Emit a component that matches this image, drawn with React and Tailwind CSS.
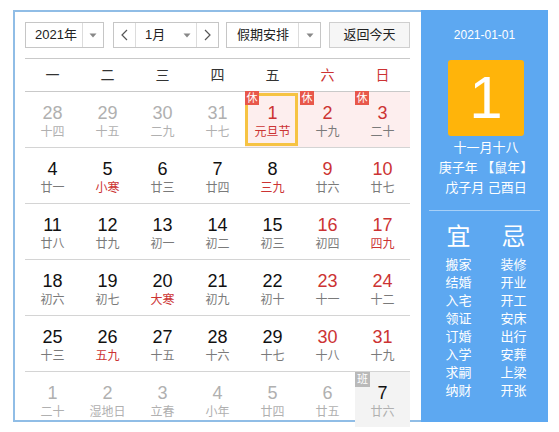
import React from "react";

const rows = [
  [
    { n: 28, l: "十四", o: true },
    { n: 29, l: "十五", o: true },
    { n: 30, l: "二九", o: true },
    { n: 31, l: "十七", o: true },
    { n: 1, l: "元旦节", red: true, lred: true, rest: true, sel: true },
    { n: 2, l: "十九", red: true, rest: true },
    { n: 3, l: "二十", red: true, rest: true },
  ],
  [
    { n: 4, l: "廿一" },
    { n: 5, l: "小寒", lred: true },
    { n: 6, l: "廿三" },
    { n: 7, l: "廿四" },
    { n: 8, l: "三九", lred: true },
    { n: 9, l: "廿六", red: true },
    { n: 10, l: "廿七", red: true },
  ],
  [
    { n: 11, l: "廿八" },
    { n: 12, l: "廿九" },
    { n: 13, l: "初一" },
    { n: 14, l: "初二" },
    { n: 15, l: "初三" },
    { n: 16, l: "初四", red: true },
    { n: 17, l: "四九", red: true, lred: true },
  ],
  [
    { n: 18, l: "初六" },
    { n: 19, l: "初七" },
    { n: 20, l: "大寒", lred: true },
    { n: 21, l: "初九" },
    { n: 22, l: "初十" },
    { n: 23, l: "十一", red: true },
    { n: 24, l: "十二", red: true },
  ],
  [
    { n: 25, l: "十三" },
    { n: 26, l: "五九", lred: true },
    { n: 27, l: "十五" },
    { n: 28, l: "十六" },
    { n: 29, l: "十七" },
    { n: 30, l: "十八", red: true },
    { n: 31, l: "十九", red: true },
  ],
  [
    { n: 1, l: "二十", o: true },
    { n: 2, l: "湿地日", o: true },
    { n: 3, l: "立春", o: true },
    { n: 4, l: "小年", o: true },
    { n: 5, l: "廿四", o: true },
    { n: 6, l: "廿五", o: true },
    { n: 7, l: "廿六", work: true },
  ],
];

const yi = ["搬家", "结婚", "入宅", "领证", "订婚", "入学", "求嗣", "纳财"];
const ji = ["装修", "开业", "开工", "安床", "出行", "安葬", "上梁", "开张"];

function Arrow() {
  return (
    <svg width="8" height="5" viewBox="0 0 8 5">
      <path d="M0.5 0.5 L7.5 0.5 L4 4.5 Z" fill="#888" />
    </svg>
  );
}

function Chevron({ dir }) {
  return (
    <svg width="7" height="12" viewBox="0 0 7 12">
      <path
        d={dir === "l" ? "M6 1 L1 6 L6 11" : "M1 1 L6 6 L1 11"}
        fill="none"
        stroke="#555"
        strokeWidth="1.2"
      />
    </svg>
  );
}

function Cell({ c }) {
  let numColor = "text-[#111]";
  if (c.o) numColor = "text-[#b0b0b0]";
  else if (c.red) numColor = "text-[#cc3333]";
  let lunColor = "text-[#7a7a7a]";
  if (c.o || c.work) lunColor = "text-[#b0b0b0]";
  if (c.lred) lunColor = "text-[#cc3333]";
  let bg = "";
  if (c.rest) bg = "bg-[#fdeeee]";
  if (c.work) bg = "bg-[#f3f3f3]";
  return (
    <div className={`relative h-[55px] flex flex-col items-center pt-[10px] ${bg}`}>
      {c.sel && (
        <div className="absolute left-0 top-[1px] w-[53px] h-[53px] border-[3px] border-[#f6c343]" />
      )}
      {c.rest && (
        <div className="absolute left-0 top-[-1px] w-[14px] h-[14px] bg-[#e8574a] text-white text-[11px] leading-[14px] text-center">
          休
        </div>
      )}
      {c.work && (
        <div className="absolute left-0 top-0 w-[15px] h-[15px] bg-[#b9b9b9] text-white text-[11px] leading-[15px] text-center">
          班
        </div>
      )}
      <div className={`relative text-[18px] leading-[22px] ${numColor}`}>{c.n}</div>
      <div className={`relative text-[12px] leading-[16px] ${lunColor}`}>{c.l}</div>
    </div>
  );
}

export default function App() {
  const font = { fontFamily: '"Liberation Sans", "Noto Sans CJK SC", sans-serif' };
  return (
    <div className="w-[559px] h-[432px] bg-white pt-[10px] pl-[13px]" style={font}>
      <div className="w-[535px] h-[412px] border-2 border-[#90bde6] flex">
        <div className="w-[406px] pl-[10px] pr-[11px] pt-[10px]">
          {/* controls */}
          <div className="flex h-[26px] text-[13px] text-[#222]">
            <div className="flex w-[79px] border border-[#c6c6c6] bg-white">
              <div className="w-[56px] flex items-center pl-[9px]">2021年</div>
              <div className="flex-1 flex items-center justify-center border-l border-[#dcdcdc]">
                <Arrow />
              </div>
            </div>
            <div className="flex w-[106px] ml-[9px] border border-[#c6c6c6] bg-white">
              <div className="w-[22px] flex items-center justify-center border-r border-[#dcdcdc]">
                <Chevron dir="l" />
              </div>
              <div className="flex-1 flex items-center pl-[9px]">1月</div>
              <div className="w-[18px] flex items-center justify-center">
                <Arrow />
              </div>
              <div className="w-[22px] flex items-center justify-center border-l border-[#dcdcdc]">
                <Chevron dir="r" />
              </div>
            </div>
            <div className="flex w-[95px] ml-[7px] border border-[#c6c6c6] bg-white">
              <div className="w-[71px] flex items-center pl-[10px]">假期安排</div>
              <div className="flex-1 flex items-center justify-center border-l border-[#dcdcdc]">
                <Arrow />
              </div>
            </div>
            <div className="flex w-[81px] ml-[8px] border border-[#cfcfcf] bg-[#f6f6f6] items-center justify-center">
              返回今天
            </div>
          </div>
          {/* weekday header */}
          <div className="mt-[10px] grid grid-cols-7 h-[34px] border-t border-b border-[#c9c9c9] text-[14px] items-center text-center text-[#333]">
            <div>一</div>
            <div>二</div>
            <div>三</div>
            <div>四</div>
            <div>五</div>
            <div className="text-[#cc3333]">六</div>
            <div className="text-[#cc3333]">日</div>
          </div>
          {rows.map((r, i) => (
            <div key={i} className={`grid grid-cols-7 ${i > 0 ? "border-t border-[#d4d4d4]" : ""}`}>
              {r.map((c, j) => (
                <Cell key={j} c={c} />
              ))}
            </div>
          ))}
        </div>
        <div className="flex-1 -mt-[2px] -mb-[2px] -mr-[2px] bg-[#5da8f1] text-white flex flex-col items-center">
          <div className="mt-[17px] text-[12px] leading-[16px]">2021-01-01</div>
          <div className="mt-[17px] ml-[3px] w-[76px] h-[76px] bg-[#ffb40a] rounded-[3px] flex items-center justify-center text-[60px] leading-none">
            1
          </div>
          <div className="mt-[2px] text-[13px] leading-[20px] text-center ml-[3px]">
            <div>十一月十八</div>
            <div>庚子年 【鼠年】</div>
            <div>戊子月 己酉日</div>
          </div>
          <div className="mt-[12px] w-[111px] h-px bg-[#a7d0f7]" />
          <div className="mt-[12px] flex gap-[29px] ml-[3px]">
            <div className="flex flex-col items-center w-[26px]">
              <div className="text-[24px] leading-[28px]">宜</div>
              <div className="mt-[5px] text-[13px] leading-[18px] flex flex-col items-center">
                {yi.map((t) => (
                  <div key={t}>{t}</div>
                ))}
              </div>
            </div>
            <div className="flex flex-col items-center w-[26px]">
              <div className="text-[24px] leading-[28px]">忌</div>
              <div className="mt-[5px] text-[13px] leading-[18px] flex flex-col items-center">
                {ji.map((t) => (
                  <div key={t}>{t}</div>
                ))}
              </div>
            </div>
          </div>
        </div>
      </div>
    </div>
  );
}
